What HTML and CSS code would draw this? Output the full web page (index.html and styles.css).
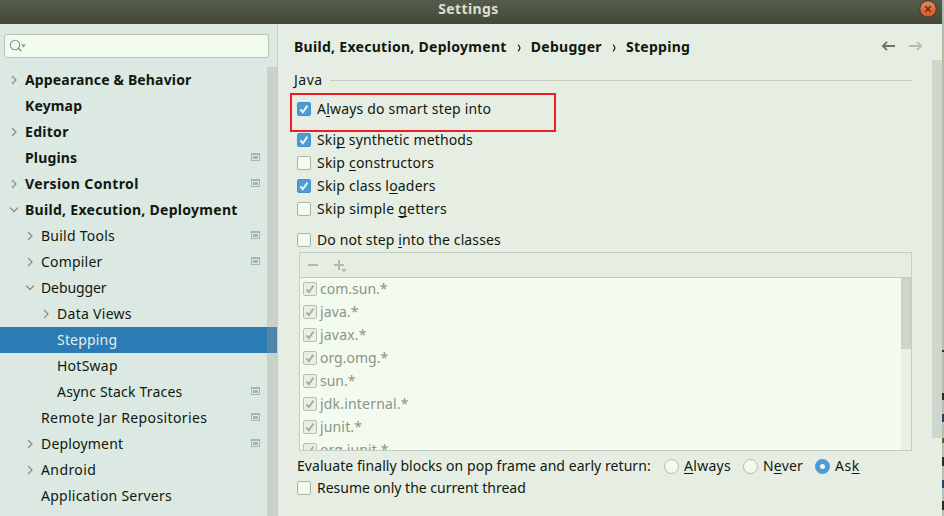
FILE: index.html
```html
<!DOCTYPE html>
<html lang="en">
<head>
<meta charset="utf-8">
<title>Settings</title>
<link rel="stylesheet" href="styles.css">
</head>
<body>
<svg class="defs" width="0" height="0">
  <symbol id="right" viewBox="0 0 10 10"><path d="M3 1l4 4-4 4" fill="none" stroke="#869389" stroke-width="1.3"/></symbol>
  <symbol id="down" viewBox="0 0 10 10"><path d="M1 2.500l4 4 4-4" fill="none" stroke="#869389" stroke-width="1.3"/></symbol>
  <symbol id="proj" viewBox="0 0 9 8"><path d="M0 0h9v8H0zM1 2v5h7V2z" fill="#a3b7b0" fill-rule="evenodd"/><path d="M2 3h5v3H2z" fill="#a3b7b0"/></symbol>
  <symbol id="tick" viewBox="0 0 14 14"><path d="M3.4 7.4l2.4 2.8 4.6-6.6" fill="none" stroke="currentColor" stroke-width="1.9"/></symbol>
</svg>
<div class="screen">
<div class="window">
  <header class="title"><span>Settings</span>
    <svg class="close" width="18" height="18" viewBox="0 0 18 18"><defs><linearGradient id="og" x2="0" y2="1"><stop stop-color="#f0855b"/><stop offset="1" stop-color="#d9541e"/></linearGradient></defs><circle cx="9" cy="9" r="8.2" fill="url(#og)" stroke="#393b2e"/><path d="M6.2 6.2l5.6 5.6M11.8 6.2l-5.6 5.6" stroke="#49301f" stroke-width="1.5"/></svg>
  </header>
  <div class="main">
    <aside class="side">
      <div class="search"><svg width="18" height="14" viewBox="0 0 18 14"><circle cx="6" cy="6" r="4.7" fill="none" stroke="#87958c" stroke-width="1.1"/><path d="M9.3 9.3l3 3" stroke="#87958c" stroke-width="1.4"/><path d="M12 5.5h5l-2.5 3z" fill="#87958c"/></svg></div>
      <div class="treebox">
      <ul class="tree">
        <li class="top"><svg class="arr"><use href="#right"/></svg><span class="s15">Appearance &amp; Behavior</span></li>
        <li class="top"><i class="arr"></i><span class="s15">Keymap</span></li>
        <li class="top"><svg class="arr"><use href="#right"/></svg><span class="s30">Editor</span></li>
        <li class="top"><i class="arr"></i><span class="s15">Plugins</span><svg class="proj"><use href="#proj"/></svg></li>
        <li class="top"><svg class="arr"><use href="#right"/></svg><span class="s40">Version Control</span><svg class="proj"><use href="#proj"/></svg></li>
        <li class="top"><svg class="arr"><use href="#down"/></svg><span class="s30">Build, Execution, Deployment</span></li>
        <li class="l2"><svg class="arr"><use href="#right"/></svg><span class="s25">Build Tools</span><svg class="proj"><use href="#proj"/></svg></li>
        <li class="l2"><svg class="arr"><use href="#right"/></svg><span class="s20">Compiler</span><svg class="proj"><use href="#proj"/></svg></li>
        <li class="l2"><svg class="arr"><use href="#down"/></svg><span class="tight">Debugger</span></li>
        <li class="l3"><svg class="arr"><use href="#right"/></svg><span class="s30">Data Views</span></li>
        <li class="l3 selected"><i class="arr"></i><span class="s20">Stepping</span></li>
        <li class="l3"><i class="arr"></i><span class="s25">HotSwap</span></li>
        <li class="l3"><i class="arr"></i><span class="s20">Async Stack Traces</span><svg class="proj"><use href="#proj"/></svg></li>
        <li class="l2"><i class="arr"></i><span class="s40">Remote Jar Repositories</span><svg class="proj"><use href="#proj"/></svg></li>
        <li class="l2"><svg class="arr"><use href="#right"/></svg><span class="s20">Deployment</span><svg class="proj"><use href="#proj"/></svg></li>
        <li class="l2"><svg class="arr"><use href="#right"/></svg><span class="s40">Android</span></li>
        <li class="l2"><i class="arr"></i><span class="s25">Application Servers</span></li>
      </ul>
      <div class="sidebar-scroll"></div>
      </div>
    </aside>
    <main class="content">
      <nav class="crumbs">
        <span class="s30">Build, Execution, Deployment</span><svg class="sep" viewBox="0 0 5 8"><path d="M1 .7q1.6 1.6 2 3.300-.4 1.7-2 3.3" fill="none" stroke="#222" stroke-width="1.2"/></svg><span class="s30">Debugger</span><svg class="sep" viewBox="0 0 5 8"><path d="M1 .7q1.6 1.6 2 3.300-.4 1.7-2 3.3" fill="none" stroke="#222" stroke-width="1.2"/></svg><span class="s30">Stepping</span>
        <div class="history">
          <svg width="14" height="10" viewBox="0 0 14 10"><path d="M14 5H2M6 .8L1.8 5 6 9.200" fill="none" stroke="#6b746b" stroke-width="1.8"/></svg>
          <svg width="14" height="10" viewBox="0 0 14 10"><path d="M1 5h12M9 .8L13.200 5 9 9.200" fill="none" stroke="#b5beb4" stroke-width="1.8"/></svg>
        </div>
      </nav>
      <div class="group"><span class="s50">Java</span><hr></div>
      <div class="options">
        <div class="marked"><label class="opt"><b class="box on"><svg><use href="#tick"/></svg></b><span class="s20">A<u>l</u>ways do smart step into</span></label></div>
        <label class="opt"><b class="box on"><svg><use href="#tick"/></svg></b><span class="s15">Ski<u>p</u> synthetic methods</span></label>
        <label class="opt"><b class="box"></b><span class="s20">Skip <u>c</u>onstructors</span></label>
        <label class="opt"><b class="box on"><svg><use href="#tick"/></svg></b><span class="s20">Skip class l<u>o</u>aders</span></label>
        <label class="opt"><b class="box"></b><span class="s25">Skip simple <u>g</u>etters</span></label>
        <label class="opt gap"><b class="box"></b><span class="s10">Do not step <u>i</u>nto the classes</span></label>
      </div>
      <section class="panel">
        <div class="toolbar">
          <svg width="10" height="12" viewBox="0 0 10 12"><path d="M0 5h10v2H0z" fill="#b0bab0"/></svg>
          <svg width="13" height="13" viewBox="0 0 13 13"><path d="M0 5h4V1h2v4h4v2H6v4H4V7H0zM7 10h6l-3 3z" fill="#b0bab0"/></svg>
        </div>
        <div class="listbox">
          <div class="list">
            <div><b class="box dis"><svg><use href="#tick"/></svg></b><span>com.sun.*</span></div>
            <div><b class="box dis"><svg><use href="#tick"/></svg></b><span class="s10">java.*</span></div>
            <div><b class="box dis"><svg><use href="#tick"/></svg></b><span class="s20">javax.*</span></div>
            <div><b class="box dis"><svg><use href="#tick"/></svg></b><span>org.omg.*</span></div>
            <div><b class="box dis"><svg><use href="#tick"/></svg></b><span>sun.*</span></div>
            <div><b class="box dis"><svg><use href="#tick"/></svg></b><span class="s20">jdk.internal.*</span></div>
            <div><b class="box dis"><svg><use href="#tick"/></svg></b><span class="s15">junit.*</span></div>
            <div><b class="box dis"><svg><use href="#tick"/></svg></b><span class="s10">org.junit.*</span></div>
          </div>
          <div class="track"><div class="thumb"></div></div>
        </div>
      </section>
      <div class="radios">
        <span class="question">Evaluate finally blocks on pop frame and early return:</span>
        <label class="always"><i class="radio"></i><span class="s30"><u>A</u>lways</span></label>
        <label class="never"><i class="radio"></i><span class="s20">N<u>e</u>ver</span></label>
        <label class="ask"><i class="radio sel"></i><span class="s50">As<u>k</u></span></label>
      </div>
      <label class="opt resume"><b class="box"></b><span>Resume only the current thread</span></label>
      <div class="page-scroll"></div>
    </main>
  </div>
</div>
<div class="behind"></div>
</div>
</body>
</html>
```
FILE: styles.css
```css
* { box-sizing: border-box; }
body { margin: 0; width: 944px; height: 516px; overflow: hidden; font: 14px/20px "Noto Sans", "Open Sans", sans-serif; color: #10180f; }
svg { display: block; flex: none; }
.defs { position: absolute; }
span { white-space: nowrap; }
u { text-decoration: underline; text-decoration-thickness: 1px; text-underline-offset: 2px; text-decoration-skip-ink: none; }

/* tracking steps */
.tight { letter-spacing: -.1px; }
.s10 { letter-spacing: .1px; }
.s15 { letter-spacing: .15px; }
.s20 { letter-spacing: .19px; }
.s25 { letter-spacing: .25px; }
.s30 { letter-spacing: .29px; }
.s40 { letter-spacing: .39px; }
.s50 { letter-spacing: .5px; }

.screen { display: flex; height: 516px; }
.window { width: 942px; display: flex; flex-direction: column; }
.behind { width: 2px; background: linear-gradient(#b3bcb0 0 48px, #b5bda0 48px 70px, #b4beb4 70px 350px, #26302a 350px 352px, #b4beb4 352px 393px, #2a3029 393px 400px, #b4beb4 400px 414px, #24455d 414px 422px, #b4beb4 422px 438px, #6e5a25 438px 443px, #b4beb4 443px 457px, #26302a 457px 466px, #b4beb4 466px 480px, #24455d 480px 488px, #b4beb4 488px 501px, #26302a 501px 510px, #b4beb4 510px); }
.title { position: relative; height: 24px; background: linear-gradient(#565c4b, #434839); color: #dcdfce; font-weight: 700; text-align: center; line-height: 18px; padding-right: 5px; letter-spacing: .4px; }
.close { position: absolute; right: 5px; top: 0; }
.main { display: flex; height: 492px; }
.side { width: 278px; background: #dce8e2; border-right: 1px solid #c6cfc5; padding-top: 10px; }
.search { width: 265px; height: 24px; margin-left: 4px; border: 1px solid #b6c3b6; border-radius: 3px; background: #f3fbef; padding: 4px 0 0 4px; }
.treebox { display: flex; margin-top: 9px; height: 449px; position: relative; }
.tree { list-style: none; margin: 0; padding: 0; width: 277px; }
.tree li { height: 26px; display: flex; align-items: center; padding: 0 17px 0 9px; }
.tree li.l2 { padding-left: 25px; }
.tree li.l3 { padding-left: 41px; }
.arr { width: 10px; height: 10px; margin-right: 6px; flex: none; }
.top, .crumbs { font-weight: 700; }
.proj { width: 9px; height: 8px; margin: 0 0 2px auto; }
.selected { background: #2b7cb5; color: #e4f0ea; }
.sidebar-scroll { position: absolute; right: 0; top: 0; width: 10px; height: 449px; background: rgba(160, 160, 145, .3); }
.content { position: relative; width: 664px; background: #e6eee3; padding-left: 16px; }
.crumbs { display: flex; align-items: center; height: 46px; }
.sep { width: 5px; height: 8px; margin: 2px 9px 0 10px; }
.history { margin: 0 20px 2px auto; display: flex; gap: 13px; }
.group { display: flex; align-items: center; height: 20px; width: 618px; justify-content: space-between; }
.group hr { width: 582px; height: 1px; border: 0; margin: 0; background: #c5cec3; }
.options { margin-top: 3px; }
.marked { width: 266px; height: 39px; border: 2px solid #ee1c25; margin-left: -4px; padding: 2px 0 0 1px; }
.marked + .opt { margin-top: -4px; }
.opt { display: flex; align-items: center; height: 23px; padding-left: 3px; }
.opt.gap { margin-top: 8px; }
.opt.resume { margin-top: -1px; }
.box { width: 14px; height: 14px; flex: none; border: 1px solid #abb3a8; border-radius: 2px; background: #f3fbef; margin-right: 6px; color: #f3fbef; }
.marked .opt { padding-left: 4px; }
.box svg { width: 14px; height: 14px; margin: -1px; }
.on { background: #4b9cd6; border-color: #4691c7; }
.dis { background: #e8f0e5; border-color: #b6bfb4; color: #a5aea3; margin-right: 3px; }
.panel { width: 613px; height: 199px; margin: 1px 0 0 5px; border: 1px solid #c5cec3; }
.toolbar { height: 25px; border-bottom: 1px solid #c5cec3; display: flex; gap: 16px; padding: 6px 0 0 8px; }
.listbox { height: 172px; display: flex; background: #f3fbef; overflow: hidden; }
.list { flex: 1; color: #8b948a; margin-top: -1px; }
.list div { height: 23px; display: flex; align-items: center; padding-left: 3px; }
.track { width: 10px; background: #e8f1e6; }
.thumb { height: 71px; background: #cfd7cc; border: 1px solid #c9d1c6; }
.radios { display: flex; height: 22px; margin-top: 4px; padding-left: 3px; align-items: center; }
.question { width: 367px; letter-spacing: .06px; }
.radios label { display: flex; align-items: center; }
.always { width: 79px; }
.never { width: 72px; }
.radio { width: 15px; height: 15px; flex: none; border: 1px solid #b2bab0; border-radius: 50%; background: #f3fbef; margin-right: 5px; }
.radio.sel { border: 5px solid #4b9cd6; }
.page-scroll { position: absolute; right: 0; top: 36px; width: 10px; height: 378px; background: #cfd7cc; }
```
